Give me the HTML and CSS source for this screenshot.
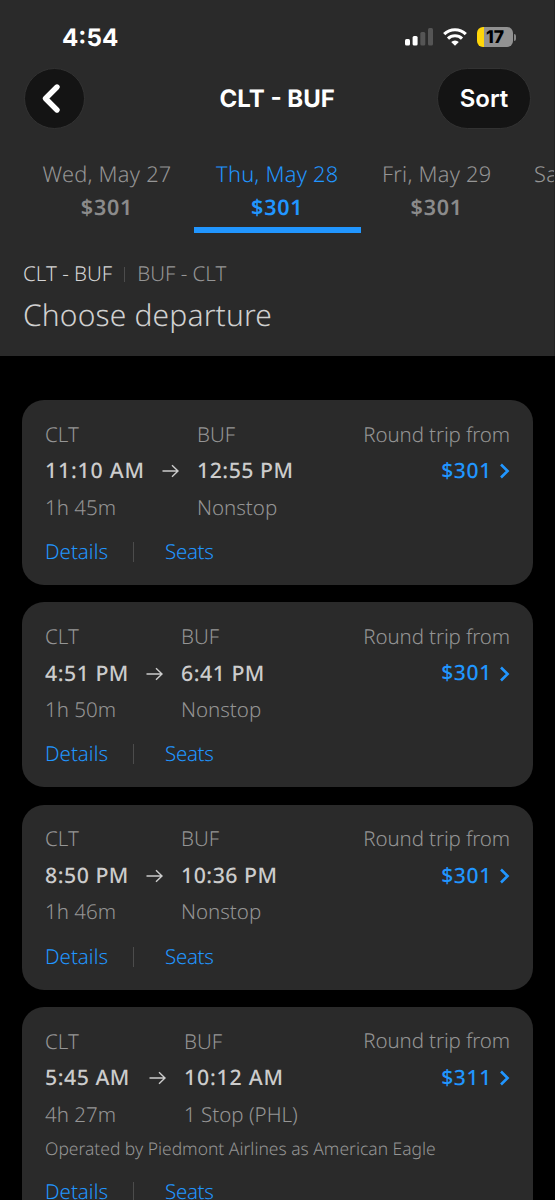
FILE: index.html
```html
<!DOCTYPE html>
<html lang="en">
<head>
<meta charset="utf-8">
<title>CLT - BUF</title>
<link rel="stylesheet" href="styles.css">
</head>
<body>
<svg class="defs" width="0" height="0">
  <symbol id="arrow" viewBox="0 0 17 14"><path d="M.5 7H16M10 1.2L16 7l-6 5.8" fill="none" stroke="currentColor" stroke-width="1.4"/></symbol>
  <symbol id="chevron" viewBox="0 0 11 16"><path d="M2 1.5L8.6 8 2 14.5" fill="none" stroke="currentColor" stroke-width="2.6"/></symbol>
</svg>
<main class="screen">
  <header class="top">
    <div class="status">
      <span class="clock">4:54</span>
      <div class="status-icons">
        <svg class="signal" width="29" height="18" viewBox="0 0 29 18"><rect x="0" y="11" width="5" height="6.6" rx="1.5" fill="#fff"/><rect x="7.6" y="8" width="5" height="9.6" rx="1.5" fill="#fff"/><rect x="15.3" y="4" width="5" height="13.6" rx="1.5" fill="#555"/><rect x="23" y="0" width="5" height="17.6" rx="1.5" fill="#555"/></svg>
        <svg class="wifi" width="24" height="18" viewBox="0 0 24 18"><g fill="none" stroke="#fff" stroke-width="3.1"><path d="M1.2 6.1a15.4 15.4 0 0 1 21.6 0"/><path d="M5 10.6a10 10 0 0 1 14 0"/></g><path d="M12 17.8L8.2 14a5.5 5.5 0 0 1 7.6 0z" fill="#fff"/></svg>
        <div class="battery"><span class="battery-body">17</span><i class="battery-cap"></i></div>
      </div>
    </div>
    <nav class="nav">
      <button class="back" aria-label="Back"><svg width="20" height="31" viewBox="0 0 20 31"><path d="M16 4L4.5 15.5 16 27" fill="none" stroke="#fff" stroke-width="5.4" stroke-linecap="round" stroke-linejoin="round"/></svg></button>
      <h1 class="title">CLT - BUF</h1>
      <button class="sort">Sort</button>
    </nav>
    <div class="tabs">
      <div class="tab tab-wed"><span>Wed, May 27</span><b>$301</b></div>
      <div class="tab tab-thu active"><span>Thu, May 28</span><b>$301</b></div>
      <div class="tab tab-fri"><span>Fri, May 29</span><b>$301</b></div>
      <div class="tab tab-sat"><span>Sat, May 30</span></div>
    </div>
    <div class="legs"><span class="leg on">CLT - BUF</span><i class="leg-sep"></i><span class="leg">BUF - CLT</span></div>
    <h2 class="heading">Choose departure</h2>
  </header>
  <section class="list">
    <article class="card">
      <div class="info"><div class="route w1">
        <span>CLT</span><i></i><span>BUF</span>
        <b class="wide">11:10 AM</b><svg class="arrow"><use href="#arrow"/></svg><b>12:55 PM</b>
        <span>1h 45m</span><i></i><span>Nonstop</span></div>
        <div class="fare"><span>Round trip from</span><b>$301<svg class="chev"><use href="#chevron"/></svg></b></div></div>
      <div class="links"><a class="details">Details</a><i class="sep"></i><a class="seats">Seats</a></div>
    </article>
    <article class="card">
      <div class="info"><div class="route w2">
        <span>CLT</span><i></i><span>BUF</span>
        <b>4:51 PM</b><svg class="arrow"><use href="#arrow"/></svg><b>6:41 PM</b>
        <span>1h 50m</span><i></i><span>Nonstop</span></div>
        <div class="fare"><span>Round trip from</span><b>$301<svg class="chev"><use href="#chevron"/></svg></b></div></div>
      <div class="links"><a class="details">Details</a><i class="sep"></i><a class="seats">Seats</a></div>
    </article>
    <article class="card">
      <div class="info"><div class="route w2">
        <span>CLT</span><i></i><span>BUF</span>
        <b>8:50 PM</b><svg class="arrow"><use href="#arrow"/></svg><b>10:36 PM</b>
        <span>1h 46m</span><i></i><span>Nonstop</span></div>
        <div class="fare"><span>Round trip from</span><b>$301<svg class="chev"><use href="#chevron"/></svg></b></div></div>
      <div class="links"><a class="details">Details</a><i class="sep"></i><a class="seats">Seats</a></div>
    </article>
    <article class="card">
      <div class="info"><div class="route w3">
        <span>CLT</span><i></i><span>BUF</span>
        <b>5:45 AM</b><svg class="arrow"><use href="#arrow"/></svg><b class="wide">10:12 AM</b>
        <span>4h 27m</span><i></i><span>1 Stop (PHL)</span></div>
        <div class="fare"><span>Round trip from</span><b>$311<svg class="chev"><use href="#chevron"/></svg></b></div></div>
      <p class="operator">Operated by Piedmont Airlines as American Eagle</p>
      <div class="links"><a class="details">Details</a><i class="sep"></i><a class="seats">Seats</a></div>
    </article>
  </section>
</main>
</body>
</html>
```
FILE: styles.css
```css
* { box-sizing: border-box; margin: 0; padding: 0; }
html, body { height: 1200px; overflow: hidden; background: #000; }
body { font-family: "Noto Sans", "Open Sans", sans-serif; font-size: 20.5px; font-weight: 300; color: #959595; text-rendering: geometricPrecision; }
.defs { position: absolute; }
.screen { width: 555px; height: 1200px; overflow: hidden; }
.top { height: 355.5px; background: #2a2a2a; border-right: 1px solid #222; }
.status { height: 68px; padding: 6px 38px 0 62px; display: flex; align-items: center; justify-content: space-between; }
.clock { padding-top: 1px; font: 700 24.2px/28px Inter, sans-serif; color: #fff; }
.status-icons { display: flex; align-items: center; }
.wifi { margin: 0 10px 0 9px; }
.battery { display: flex; align-items: center; gap: 1px; }
.battery-body { width: 36px; height: 20px; border-radius: 6px; background: linear-gradient(90deg, #ffd60a 7px, #929292 7px); font: 800 17.5px/21px Inter, sans-serif; color: #000; text-align: center; }
.battery-cap { width: 2px; height: 7px; border-radius: 0 3px 3px 0; background: #888; }
.nav { height: 61px; padding: 0 23px 0 23.5px; display: grid; grid-template-columns: 94px 1fr 94px; align-items: center; }
.back, .sort { height: 61px; border: 1px solid #323232; background: #141414; color: #fff; }
.back { width: 61px; border-radius: 50%; display: flex; align-items: center; justify-content: center; padding-right: 6px; }
.title { font: 700 24px/28px Inter, sans-serif; color: #fff; text-align: center; white-space: nowrap; }
.sort { width: 94px; border-radius: 31px; font: 600 24px/28px Inter, sans-serif; }
.tabs { height: 104px; padding: 29px 0 0 20px; display: flex; overflow: hidden; }
.tab { flex: none; height: 75px; display: flex; flex-direction: column; align-items: center; font-size: 21.8px; letter-spacing: .25px; line-height: 33px; white-space: nowrap; }
.tab b { font-size: 21.5px; font-weight: 600; letter-spacing: .8px; color: #8b8b8b; }
.tab-wed { width: 174px; }
.tab-thu { width: 166.5px; }
.tab-fri { width: 152.5px; }
.tab-sat { width: 158px; }
.active, .active b { color: #2196ff; }
.active { border-bottom: 6px solid #2196ff; }
.legs { height: 32px; margin-top: 25px; padding-left: 23px; display: flex; align-items: center; line-height: 32px; }
.leg.on { color: #d4d4d4; }
.leg-sep { width: 1px; height: 15px; margin: 0 12px; background: #4c4c4c; }
.heading { padding-left: 23px; font-size: 30px; font-weight: 300; letter-spacing: .15px; line-height: 49px; color: #d0d0d0; }
.list { padding: 44.5px 22px 0; display: flex; flex-direction: column; gap: 17.3px; }
.card { flex: none; width: 511px; height: 185px; padding: 16.5px 23px 0; border-radius: 22px; background: #2a2a2a; }
.card:last-child { height: 219px; }
.info { display: flex; justify-content: space-between; }
.route { display: grid; grid-auto-rows: 36.5px; align-items: center; line-height: 36px; white-space: nowrap; }
.w1 { grid-template-columns: 117px 35px auto; }
.w2 { grid-template-columns: 101px 35px auto; }
.w3 { grid-template-columns: 104px 35px auto; }
.route b { font-weight: 500; font-size: 21.3px; letter-spacing: .5px; color: #ccc; }
.route .wide { letter-spacing: .8px; }
.arrow { width: 17px; height: 14px; color: #ccc; }
.fare { display: flex; flex-direction: column; align-items: flex-end; line-height: 36.5px; letter-spacing: -.1px; }
.fare b { display: flex; align-items: center; color: #2196ff; font-weight: 500; font-size: 21px; letter-spacing: .7px; }
.chev { width: 11px; height: 16px; margin-left: 7px; }
.links { display: flex; align-items: center; height: 52px; color: #2196ff; }
.details { width: 88px; }
.sep { width: 1px; height: 20px; margin-right: 31px; background: #4c4c4c; }
.seats { letter-spacing: -.3px; }
.operator { font-size: 17.45px; line-height: 33px; height: 33.5px; white-space: nowrap; }
```
